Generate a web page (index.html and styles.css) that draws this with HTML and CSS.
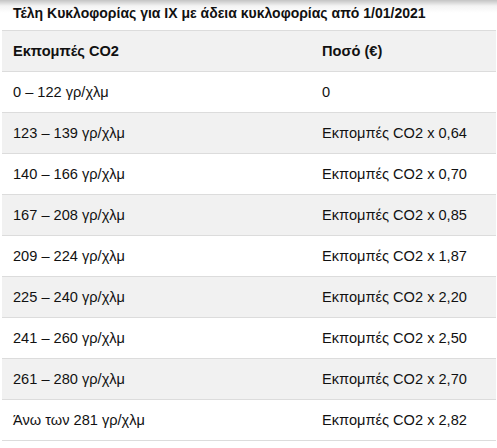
FILE: index.html
```html
<!DOCTYPE html>
<html lang="el">
<head>
<meta charset="utf-8">
<link rel="stylesheet" href="styles.css">
</head>
<body>
<div class="page">
  <div class="title">Τέλη Κυκλοφορίας για ΙΧ με άδεια κυκλοφορίας από 1/01/2021</div>
  <table class="fees">
    <thead>
      <tr><th class="c1">Εκπομπές CO2</th><th>Ποσό (€)</th></tr>
    </thead>
    <tbody>
      <tr><td class="c1">0 – 122 γρ/χλμ</td><td>0</td></tr>
      <tr><td class="c1">123 – 139 γρ/χλμ</td><td>Εκπομπές CO2 x 0,64</td></tr>
      <tr><td class="c1">140 – 166 γρ/χλμ</td><td>Εκπομπές CO2 x 0,70</td></tr>
      <tr><td class="c1">167 – 208 γρ/χλμ</td><td>Εκπομπές CO2 x 0,85</td></tr>
      <tr><td class="c1">209 – 224 γρ/χλμ</td><td>Εκπομπές CO2 x 1,87</td></tr>
      <tr><td class="c1">225 – 240 γρ/χλμ</td><td>Εκπομπές CO2 x 2,20</td></tr>
      <tr><td class="c1">241 – 260 γρ/χλμ</td><td>Εκπομπές CO2 x 2,50</td></tr>
      <tr><td class="c1">261 – 280 γρ/χλμ</td><td>Εκπομπές CO2 x 2,70</td></tr>
      <tr><td class="c1">Άνω των 281 γρ/χλμ</td><td>Εκπομπές CO2 x 2,82</td></tr>
    </tbody>
  </table>
</div>
</body>
</html>
```
FILE: styles.css
```css
html, body {
  margin: 0;
  padding: 0;
  background: #fff;
}
body {
  font-family: "Liberation Sans", Arial, sans-serif;
  color: #111;
}
.page {
  background: linear-gradient(to bottom, #c4c4c4 0px, #f4f4f4 6px, #ffffff 13px);
  padding: 0 1px 0 2px;
}
.title {
  font-weight: bold;
  font-size: 14px;
  line-height: 18px;
  padding: 4px 0 0 11px;
  height: 30px;
  box-sizing: border-box;
  color: #111;
}
.fees {
  width: 100%;
  border-collapse: collapse;
  font-size: 14.6px;
  border-top: 1px solid #dcdcdc;
}
.fees th, .fees td {
  text-align: left;
  padding: 0 11px;
  height: 40px;
  border-bottom: 1px solid #dcdcdc;
  vertical-align: middle;
}
.fees th {
  font-weight: bold;
}
.fees .c1 {
  width: 287px;
}
.fees thead tr {
  background: #f1f1f1;
}
.fees tbody tr:nth-child(even) {
  background: #f1f1f1;
}
```
